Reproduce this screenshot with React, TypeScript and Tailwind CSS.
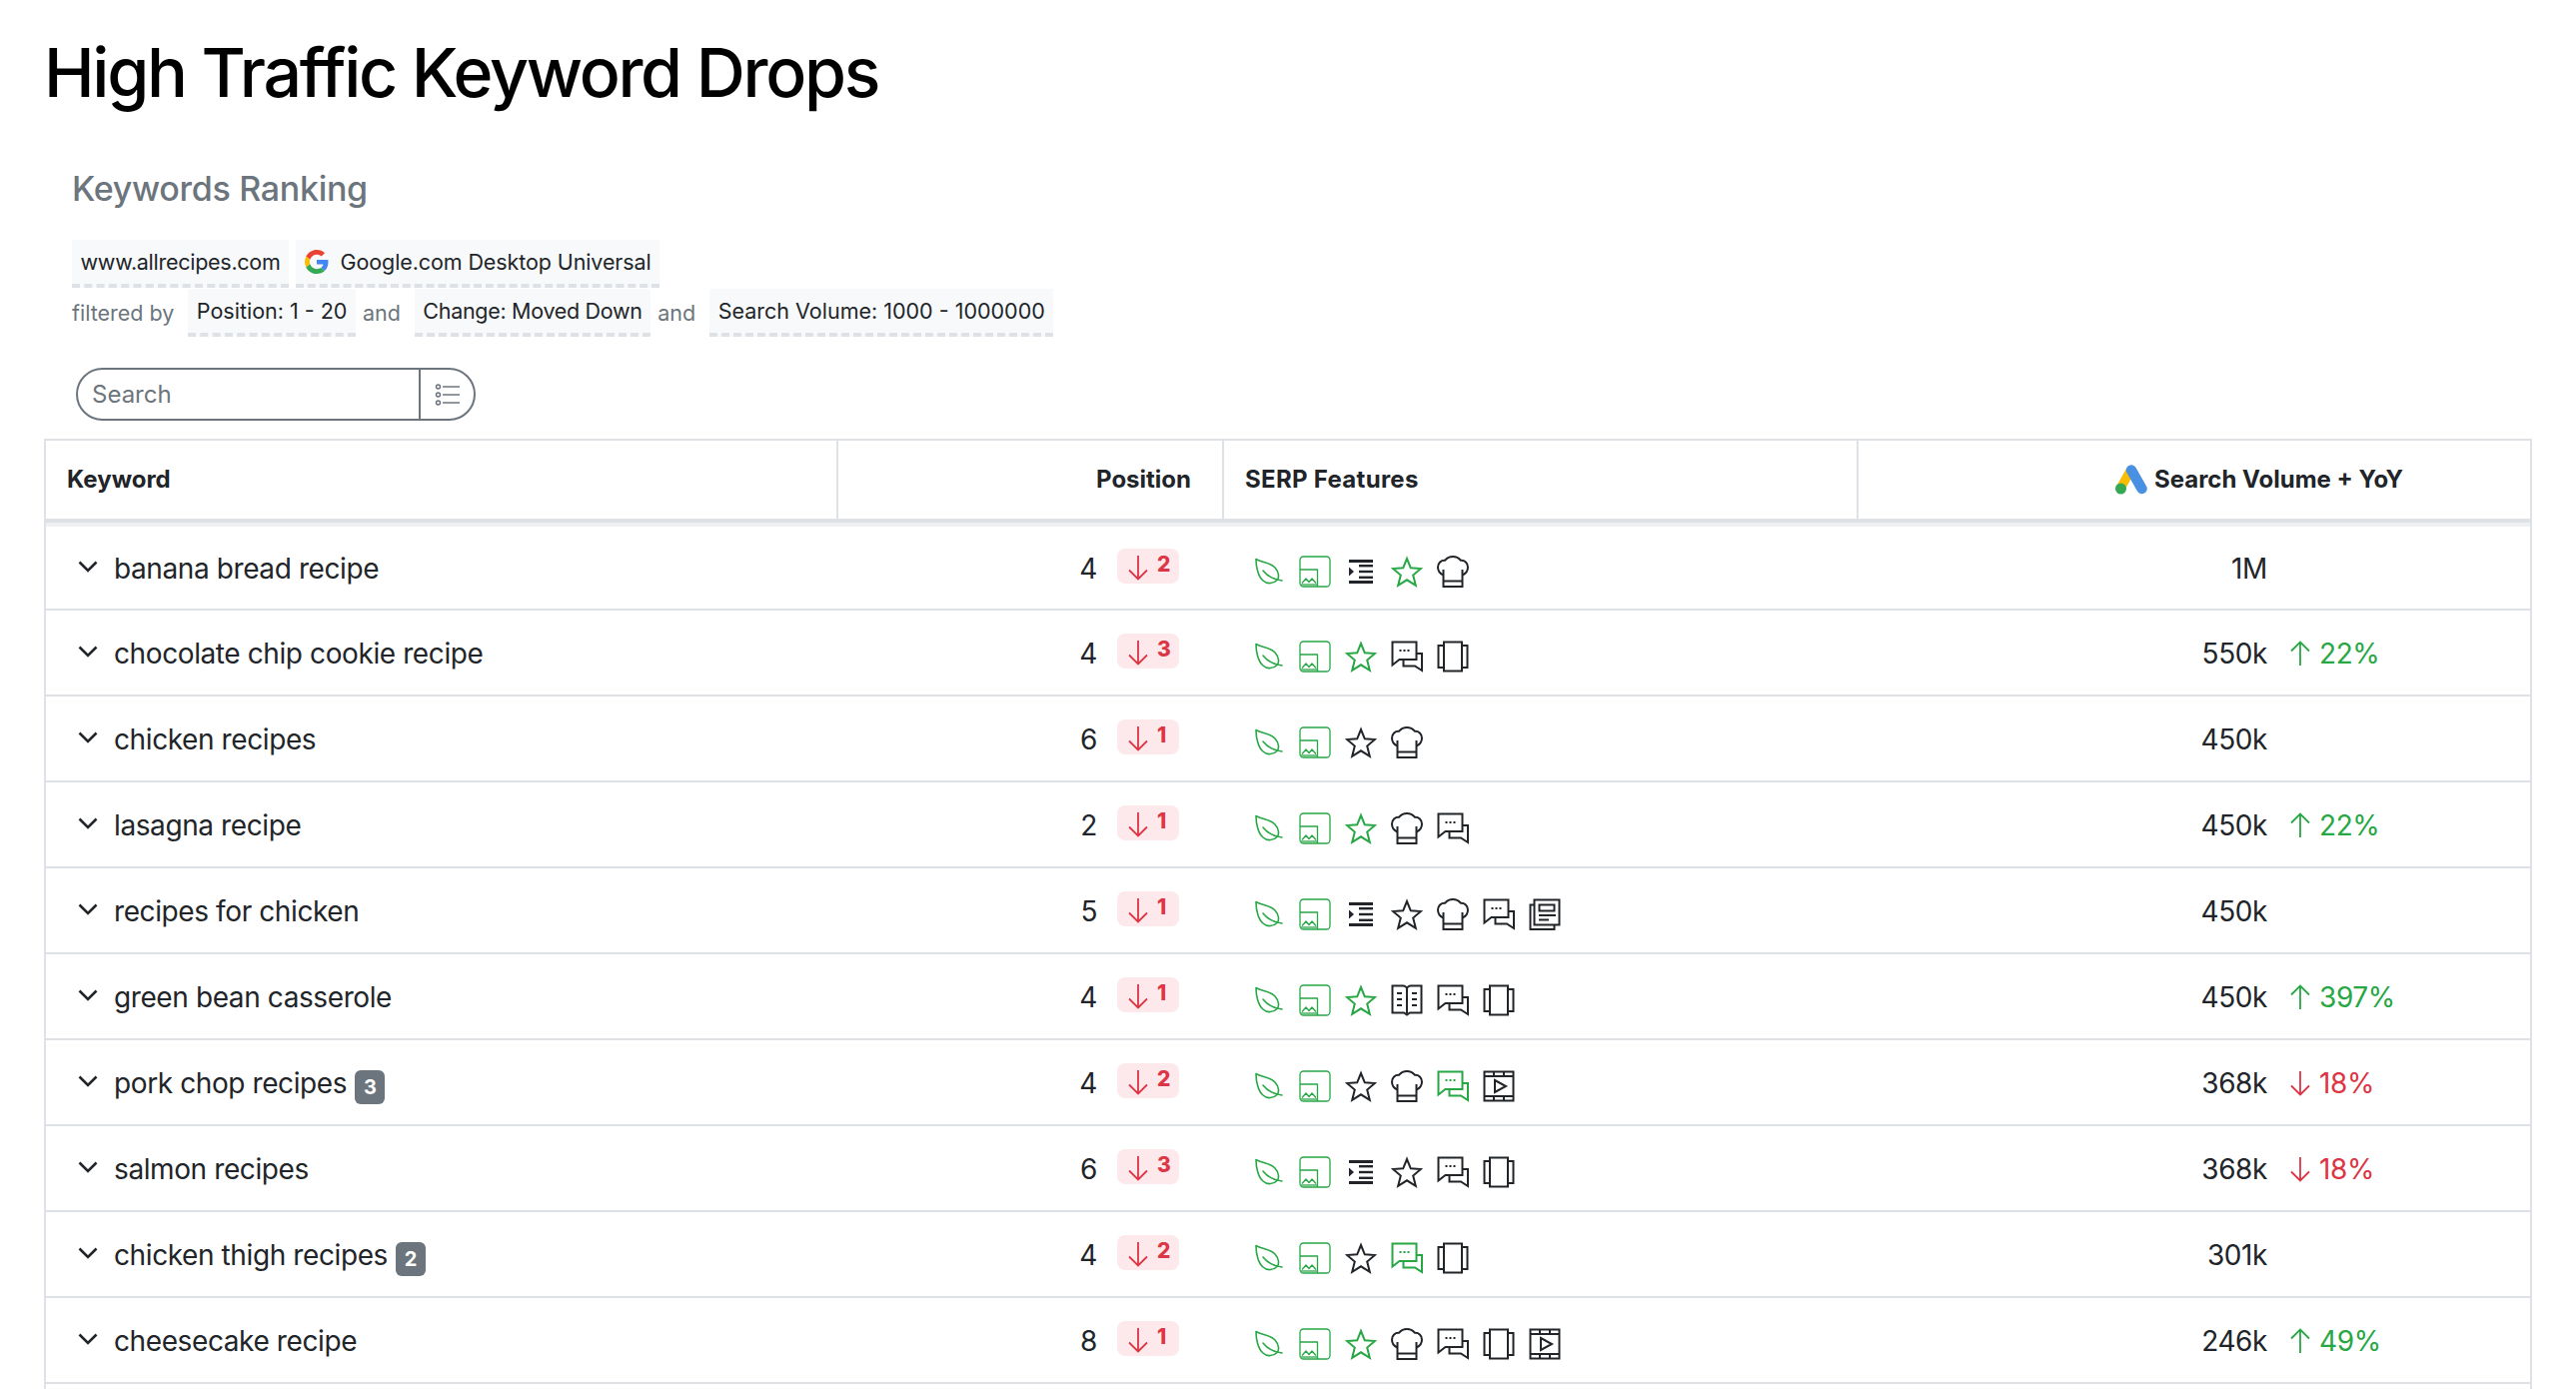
import React from 'react';

type IconName = 'leaf' | 'img' | 'indent' | 'star' | 'chef' | 'chat' | 'carousel' | 'news' | 'book' | 'video';
type Feature = { name: IconName; on?: boolean };

const f = (spec: string): Feature[] =>
  spec.split(' ').map((s) => ({ name: s.replace('*', '') as IconName, on: s.endsWith('*') }));

const rows = [
  { kw: 'banana bread recipe', pos: 4, drop: 2, serp: f('leaf* img* indent star* chef'), vol: '1M' },
  { kw: 'chocolate chip cookie recipe', pos: 4, drop: 3, serp: f('leaf* img* star* chat carousel'), vol: '550k', yoy: 22 },
  { kw: 'chicken recipes', pos: 6, drop: 1, serp: f('leaf* img* star chef'), vol: '450k' },
  { kw: 'lasagna recipe', pos: 2, drop: 1, serp: f('leaf* img* star* chef chat'), vol: '450k', yoy: 22 },
  { kw: 'recipes for chicken', pos: 5, drop: 1, serp: f('leaf* img* indent star chef chat news'), vol: '450k' },
  { kw: 'green bean casserole', pos: 4, drop: 1, serp: f('leaf* img* star* book chat carousel'), vol: '450k', yoy: 397 },
  { kw: 'pork chop recipes', count: 3, pos: 4, drop: 2, serp: f('leaf* img* star chef chat* video'), vol: '368k', yoy: -18 },
  { kw: 'salmon recipes', pos: 6, drop: 3, serp: f('leaf* img* indent star chat carousel'), vol: '368k', yoy: -18 },
  { kw: 'chicken thigh recipes', count: 2, pos: 4, drop: 2, serp: f('leaf* img* star chat* carousel'), vol: '301k' },
  { kw: 'cheesecake recipe', pos: 8, drop: 1, serp: f('leaf* img* star* chef chat carousel video'), vol: '246k', yoy: 49 },
];

const SerpIcon = ({ name, on }: Feature) => {
  const common = {
    width: 32,
    height: 32,
    viewBox: '0 0 32 32',
    fill: 'none',
    stroke: 'currentColor',
    className: `shrink-0 ${on ? 'text-[#28a745]' : 'text-[#212529]'}`,
  };
  switch (name) {
    case 'leaf':
      return (
        <svg {...common} strokeWidth={1.6} strokeLinecap="round" strokeLinejoin="round">
          <path d="M3 3.5C9 7 17 6.5 22 12 26 16.5 26.5 22 24 24.5 21 28 14 29 10 25 5 21 3 11 3 3.5Z" />
          <path d="M10 15C14 20 20 24 29 25" />
        </svg>
      );
    case 'img':
      return (
        <svg {...common} strokeWidth={1.3} strokeLinejoin="round">
          <rect x="1" y="1" width="30" height="30" rx="3.5" />
          <path d="M1 14H18.5V31" />
          <path d="M3 27.5 7 23 10 26.5 13 23 17 27.5" />
          <path d="M2 29H18" />
        </svg>
      );
    case 'indent':
      return (
        <svg {...common} stroke="none" fill="currentColor">
          <rect x="4" y="4" width="24" height="3" />
          <rect x="4" y="25" width="24" height="3" />
          <rect x="14" y="9" width="14" height="2.4" />
          <rect x="14" y="14.8" width="14" height="2.4" />
          <rect x="14" y="20.6" width="14" height="2.4" />
          <path d="M4 11.5 9 16 4 20.5Z" />
        </svg>
      );
    case 'star':
      return (
        <svg {...common} strokeWidth={2}>
          <path d="M16 3 19.8 12.3 30 13 22.2 19.6 24.8 29.8 16 24.3 7.2 29.8 9.8 19.6 2 13 12.2 12.3Z" />
        </svg>
      );
    case 'chef':
      return (
        <svg {...common} strokeWidth={2}>
          <path d="M6.5 19.5C3 18 1 14.8 1 11.5 1 7.5 4.3 4.5 8 4.8 10 2.5 13 1 16 1 19 1 22 2.5 24 4.8 27.7 4.5 31 7.5 31 11.5 31 14.8 29 18 25.5 19.5" />
          <path d="M6.5 14V31H25.5V14" />
          <path d="M6.5 25.5H25.5" />
        </svg>
      );
    case 'chat':
      return (
        <svg {...common} strokeWidth={2}>
          <path d="M1.5 1.5H25.5V19H8.5L1.5 24.5Z" />
          <path d="M25.5 13H31V30L24 25.5H12.5V19" />
          <path d="M8.5 10H10.5M12.5 10H14.5M16.5 10H18.5" />
        </svg>
      );
    case 'carousel':
      return (
        <svg {...common} strokeWidth={2}>
          <rect x="7" y="1.5" width="18" height="29" />
          <path d="M7 5H1.5V27H7" />
          <path d="M25 5H30.5V27H25" />
        </svg>
      );
    case 'news':
      return (
        <svg {...common} strokeWidth={2}>
          <rect x="5.5" y="1.5" width="25" height="25" />
          <path d="M5.5 6.5H1.5V31H25.5V26.5" />
          <rect x="10.5" y="6.5" width="15" height="6" />
          <path d="M10 17H27M10 21.5H20" />
        </svg>
      );
    case 'book':
      return (
        <svg {...common} strokeWidth={2}>
          <path d="M1.5 1.5H12C14 1.5 16 3 16 5 16 3 18 1.5 20 1.5H30.5V28.5H19L16 30.5 13 28.5H1.5Z" />
          <path d="M16 5V29" />
          <path d="M6 9H11M6 15H11M6 21H11M21 9H26M21 15H26M21 21H26" />
        </svg>
      );
    case 'video':
      return (
        <svg {...common} strokeWidth={2}>
          <rect x="1.5" y="1.5" width="29" height="29" />
          <path d="M1.5 6H30.5M1.5 26H30.5" />
          <path d="M11 1.5V6M21 1.5V6M11 26V30.5M21 26V30.5" />
          <path d="M12 10 23 16 12 22Z" />
        </svg>
      );
  }
};

const DownArrow = () => (
  <svg width="20" height="26" viewBox="0 0 20 26" fill="none" stroke="currentColor" strokeWidth="1.8" className="shrink-0">
    <path d="M10 1V24M1 15.5 10 24.5 19 15.5" />
  </svg>
);

const UpArrow = () => (
  <svg width="20" height="26" viewBox="0 0 20 26" fill="none" stroke="currentColor" strokeWidth="1.8" className="shrink-0">
    <path d="M10 25V2M1 10.5 10 1.5 19 10.5" />
  </svg>
);

const GoogleG = () => (
  <svg width="24" height="24" viewBox="0 0 48 48" className="shrink-0">
    <path fill="#EA4335" d="M24 9.5c3.54 0 6.71 1.22 9.21 3.6l6.85-6.85C35.9 2.38 30.47 0 24 0 14.62 0 6.51 5.38 2.56 13.22l7.98 6.19C12.43 13.72 17.74 9.5 24 9.5z" />
    <path fill="#4285F4" d="M46.98 24.55c0-1.57-.15-3.09-.38-4.55H24v9.02h12.94c-.58 2.96-2.26 5.48-4.78 7.18l7.73 6c4.51-4.18 7.09-10.36 7.09-17.65z" />
    <path fill="#FBBC05" d="M10.53 28.59c-.48-1.45-.76-2.99-.76-4.59s.27-3.14.76-4.59l-7.98-6.19C.92 16.46 0 20.12 0 24c0 3.88.92 7.54 2.56 10.78l7.97-6.19z" />
    <path fill="#34A853" d="M24 48c6.48 0 11.93-2.13 15.89-5.81l-7.73-6c-2.15 1.45-4.92 2.3-8.16 2.3-6.26 0-11.57-4.22-13.47-9.91l-7.98 6.19C6.51 42.62 14.62 48 24 48z" />
  </svg>
);

const AdsLogo = () => (
  <svg width="32" height="30" viewBox="0 0 32 30" className="shrink-0">
    <path d="M5 24 15 6" stroke="#FBBC04" strokeWidth="9" strokeLinecap="butt" fill="none" />
    <path d="M16 5.5 26.5 24" stroke="#4A90E2" strokeWidth="10.5" strokeLinecap="round" fill="none" />
    <circle cx="5.5" cy="24" r="5.5" fill="#34A853" />
  </svg>
);

const Tag = ({ children }: { children: React.ReactNode }) => (
  <span className="flex h-[48px] items-center gap-[12px] border-b-4 border-dashed border-[#dee2e6] bg-[#f8f9fa] px-[8.5px] text-[21.5px] text-[#212529]">
    {children}
  </span>
);

const And = ({ children }: { children: React.ReactNode }) => (
  <span className="mr-[7px] text-[21.5px] text-[#6c757d]">{children}</span>
);

const Row = ({ row, first }: { row: (typeof rows)[number]; first?: boolean }) => (
  <div
    className={`grid grid-cols-[793px_386px_635px_1fr] border-b-2 border-[#dee2e6] text-[28px] tracking-[-0.4px] text-[#212529] ${
      first ? 'h-[88px] border-t-4 border-t-[#eff0f2]' : 'h-[86px]'
    }`}
  >
    <div className="flex items-center pl-[32px] pt-[1px]">
      <svg width="20" height="12" viewBox="0 0 20 12" fill="none" stroke="currentColor" strokeWidth="2.6" className="mb-[3px] shrink-0">
        <path d="M1.5 1.5 10 10 18.5 1.5" />
      </svg>
      <span className="ml-[16px] whitespace-nowrap">{row.kw}</span>
      {row.count && (
        <span className="ml-[8px] mt-[8px] flex h-[34px] w-[30px] items-center justify-center rounded-md bg-[#6c757d] text-[20px] font-bold text-white">
          {row.count}
        </span>
      )}
    </div>
    <div className="flex items-center justify-end pr-[45px] pt-[1px]">
      <span>{row.pos}</span>
      <span className="mb-[4px] ml-[20px] flex h-[35px] w-[62px] items-start gap-[9px] rounded-lg bg-[#fde9eb] pl-[11px] pt-[6px] text-[21px] font-extrabold leading-[20px] text-[#dc3545]">
        <DownArrow />
        {row.drop}
      </span>
    </div>
    <div className="flex items-center gap-[14px] pl-[29px] pt-[7px]">
      {row.serp.map((s, i) => (
        <SerpIcon key={i} {...s} />
      ))}
    </div>
    <div className="grid grid-cols-[409px_1fr] items-center pt-[1px]">
      <span className="text-right">{row.vol}</span>
      {row.yoy !== undefined && (
        <span className={`ml-[23px] flex items-center gap-[9px] ${row.yoy > 0 ? 'text-[#28a745]' : 'text-[#dc3545]'}`}>
          {row.yoy > 0 ? <UpArrow /> : <DownArrow />}
          {Math.abs(row.yoy)}%
        </span>
      )}
    </div>
  </div>
);

export default function App() {
  return (
    <div className="h-[1390px] overflow-hidden bg-white font-['Inter',sans-serif]">
      <h1 className="pl-[44px] pt-[32px] text-[68px] font-medium leading-[80px] tracking-[-2.3px] text-black">
        High Traffic Keyword Drops
      </h1>

      <section className="pl-[72px] pt-[53px]">
        <h2 className="text-[34px] font-medium leading-[48px] tracking-[-0.3px] text-[#6c757d]">Keywords Ranking</h2>
        <div className="mt-[27px] flex gap-[7px]">
          <Tag>
            <span className="tracking-[-0.27px]">www.allrecipes.com</span>
          </Tag>
          <Tag>
            <GoogleG />
            <span className="tracking-[-0.1px]">Google.com Desktop Universal</span>
          </Tag>
        </div>
        <div className="mt-[1px] flex items-center gap-[7px]">
          <span className="mr-[7px] text-[21.5px] text-[#6c757d]">filtered by</span>
          <Tag>Position: 1 - 20</Tag>
          <And>and</And>
          <Tag>
            <span className="tracking-[-0.3px]">Change: Moved Down</span>
          </Tag>
          <And>and</And>
          <Tag>Search Volume: 1000 - 1000000</Tag>
        </div>
        <div className="ml-[4px] mt-[31px] flex h-[53px] w-[400px] overflow-hidden rounded-full border-2 border-[#6c757d]">
          <span className="flex flex-1 items-center border-r-2 border-[#6c757d] pl-[14px] text-[24px] text-[#6c757d]">Search</span>
          <span className="flex w-[53px] items-center pl-[14px] text-[#6c757d]">
            <svg width="26" height="24" viewBox="0 0 26 24" fill="none" stroke="currentColor" strokeWidth="1.5">
              <circle cx="3.5" cy="4" r="2" />
              <circle cx="3.5" cy="12" r="2" />
              <circle cx="3.5" cy="20" r="2" />
              <path d="M8 4H25M8 12H25M8 20H25" />
            </svg>
          </span>
        </div>
      </section>

      <div className="mx-[44px] mt-[18px] border-x-2 border-t-2 border-[#dee2e6]">
        <div className="grid h-[82px] grid-cols-[793px_386px_635px_1fr] border-b-4 border-[#dee2e6] text-[24px] font-bold text-[#212529]">
          <div className="flex items-center border-r-2 border-[#dee2e6] pl-[21px]">Keyword</div>
          <div className="flex items-center justify-end border-r-2 border-[#dee2e6] pr-[31px]">Position</div>
          <div className="flex items-center border-r-2 border-[#dee2e6] pl-[21px]">
            <span className="tracking-[0.3px]">SERP Features</span>
          </div>
          <div className="flex items-center justify-end gap-[7px] pr-[127px]">
            <AdsLogo />
            Search Volume + YoY
          </div>
        </div>
        {rows.map((row, i) => (
          <Row key={row.kw} row={row} first={i === 0} />
        ))}
        <div className="h-[86px]" />
      </div>
    </div>
  );
}
